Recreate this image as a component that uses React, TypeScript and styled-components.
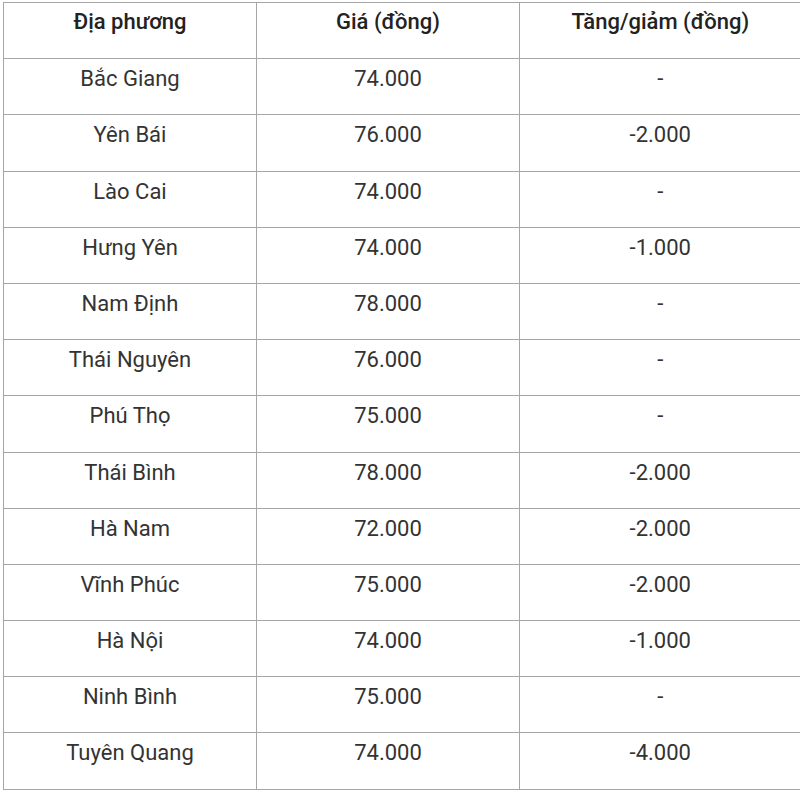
import React from 'react';
import styled, { createGlobalStyle } from 'styled-components';

const GlobalStyle = createGlobalStyle`
  html, body {
    margin: 0;
    padding: 0;
    background: #ffffff;
    overflow: hidden;
  }
`;

const Wrapper = styled.div`
  padding: 2px 0 0 3px;
  font-family: Roboto, "Noto Sans", Arial, sans-serif;
  color: #333333;
`;

const Table = styled.table`
  border-collapse: collapse;
  table-layout: fixed;
  width: 797px;
`;

const Cell = styled.td<{ $last?: boolean }>`
  height: 56.2px;
  box-sizing: border-box;
  padding: 5px 4px 0;
  vertical-align: top;
  text-align: center;
  font-size: 22px;
  line-height: 30px;
  border-top: 1px solid #a6a6a6;
  border-bottom: 1px solid #a6a6a6;
  border-left: 1px solid #a6a6a6;
  border-right: ${(p) => (p.$last ? 'none' : '1px solid #a6a6a6')};
`;

const HeadCell = styled(Cell).attrs({ as: 'th' })`
  font-weight: 500;
  color: #222222;
  padding-top: 4px;
`;

const rows: [string, string, string][] = [
  ['Bắc Giang', '74.000', '-'],
  ['Yên Bái', '76.000', '-2.000'],
  ['Lào Cai', '74.000', '-'],
  ['Hưng Yên', '74.000', '-1.000'],
  ['Nam Định', '78.000', '-'],
  ['Thái Nguyên', '76.000', '-'],
  ['Phú Thọ', '75.000', '-'],
  ['Thái Bình', '78.000', '-2.000'],
  ['Hà Nam', '72.000', '-2.000'],
  ['Vĩnh Phúc', '75.000', '-2.000'],
  ['Hà Nội', '74.000', '-1.000'],
  ['Ninh Bình', '75.000', '-'],
  ['Tuyên Quang', '74.000', '-4.000'],
];

const App: React.FC = () => {
  return (
    <>
      <GlobalStyle />
      <Wrapper>
        <Table>
          <colgroup>
            <col style={{ width: 253 }} />
            <col style={{ width: 263 }} />
            <col style={{ width: 281 }} />
          </colgroup>
          <thead>
            <tr>
              <HeadCell>Địa phương</HeadCell>
              <HeadCell>Giá (đồng)</HeadCell>
              <HeadCell $last>Tăng/giảm (đồng)</HeadCell>
            </tr>
          </thead>
          <tbody>
            {rows.map(([place, price, change]) => (
              <tr key={place}>
                <Cell>{place}</Cell>
                <Cell>{price}</Cell>
                <Cell $last>{change}</Cell>
              </tr>
            ))}
          </tbody>
        </Table>
      </Wrapper>
    </>
  );
};

export default App;
